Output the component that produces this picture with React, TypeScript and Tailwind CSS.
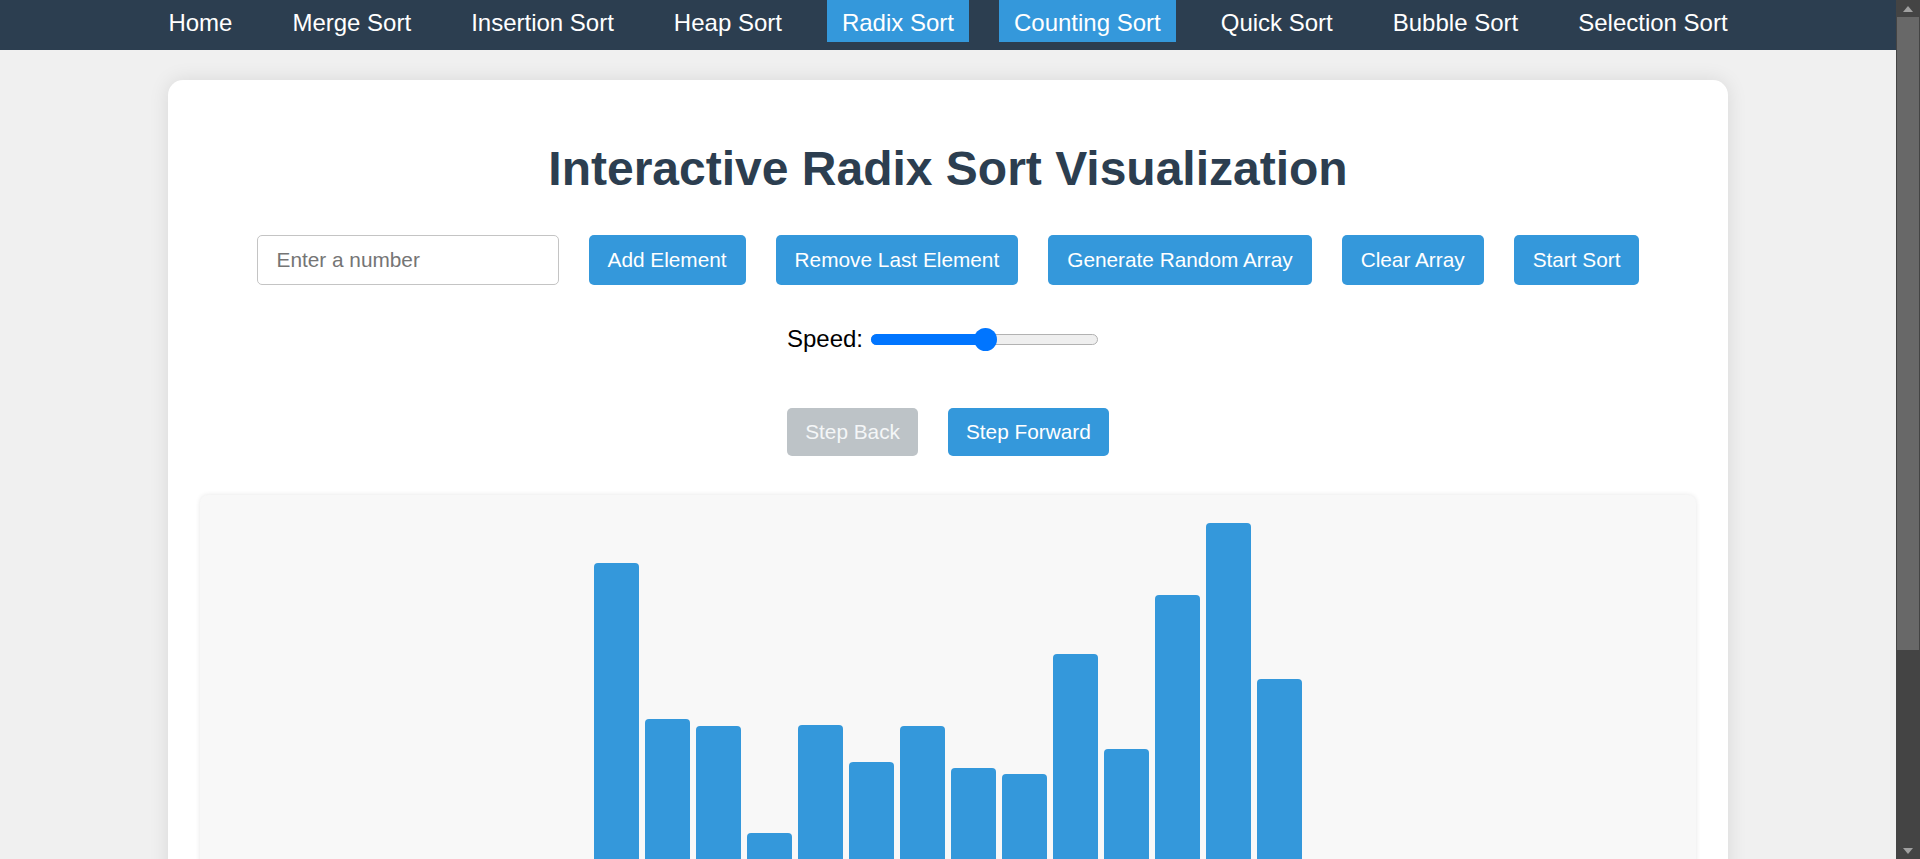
import { useState } from 'react';

const navItems = [
  'Home',
  'Merge Sort',
  'Insertion Sort',
  'Heap Sort',
  'Radix Sort',
  'Counting Sort',
  'Quick Sort',
  'Bubble Sort',
  'Selection Sort',
];

const highlighted = ['Radix Sort', 'Counting Sort'];

// bar heights in px, measured from the container floor
const bars = [330, 174, 167, 60, 168, 131, 167, 125, 119, 239, 144, 298, 370, 214];

const actions = ['Add Element', 'Remove Last Element', 'Generate Random Array', 'Clear Array', 'Start Sort'];

function SpeedSlider({ value }: { value: number }) {
  const trackWidth = 227;
  const fill = Math.round((trackWidth * value) / 100);

  return (
    <div className="relative h-[23px] w-[227px]">
      <div className="absolute left-0 right-0 top-[6px] h-[11px] rounded-full border border-[#b2b2b2] bg-[#efefef]" />
      <div className="absolute left-0 top-[6px] h-[11px] rounded-full bg-[#0075ff]" style={{ width: fill }} />
      <div
        className="absolute top-0 h-[23px] w-[23px] rounded-full bg-[#0075ff]"
        style={{ left: fill - 11 }}
      />
    </div>
  );
}

function Scrollbar() {
  return (
    <div className="sticky top-0 flex h-screen w-[24px] shrink-0 flex-col bg-[#444444]">
      <div className="flex h-[17px] items-center justify-center">
        <div className="h-0 w-0 border-x-[5px] border-b-[6px] border-x-transparent border-b-[#a0a0a0]" />
      </div>
      <div className="mx-[1px] h-[633px] bg-[#686868]" />
      <div className="flex-1" />
      <div className="flex h-[17px] items-center justify-center">
        <div className="h-0 w-0 border-x-[5px] border-t-[6px] border-x-transparent border-t-[#a0a0a0]" />
      </div>
    </div>
  );
}

export default function App() {
  const [value, setValue] = useState('');

  return (
    <div className="flex min-h-screen bg-[#f0f0f0] font-['Liberation_Sans',Arial,sans-serif]">
      <div className="min-w-0 flex-1 pb-10">
        <nav className="h-[50px] bg-[#2c3e50]">
          <ul className="flex justify-center gap-[30px]">
            {navItems.map((item) => (
              <li key={item}>
                <a
                  href="#"
                  className={`block h-[42px] px-[15px] pt-[9px] text-[24px] leading-[28px] text-white ${
                    highlighted.includes(item) ? 'bg-[#3498db]' : ''
                  }`}
                >
                  {item}
                </a>
              </li>
            ))}
          </ul>
        </nav>

        <main className="mx-auto mt-[30px] w-[1560px] rounded-[15px] bg-white px-[30px] pb-[30px] pt-[61px] shadow-[0_0_20px_rgba(0,0,0,0.1)]">
          <h1 className="text-center text-[48px] font-bold leading-[56px] text-[#2c3e50]">
            Interactive Radix Sort Visualization
          </h1>

          <div className="mt-[38px] flex justify-center gap-[30px]">
            <input
              type="number"
              value={value}
              onChange={(e) => setValue(e.target.value)}
              placeholder="Enter a number"
              className="h-[50px] w-[302px] rounded-[5px] border border-[#c4c4c4] px-[19px] text-[20.8px] text-black outline-none placeholder:text-[#757575]"
            />
            {actions.map((label) => (
              <button
                key={label}
                type="button"
                className="h-[50px] rounded-[5px] bg-[#3498db] px-[19px] text-[20.8px] text-white"
              >
                {label}
              </button>
            ))}
          </div>

          <div className="mt-[40px] flex h-[28px] items-center justify-center gap-[8px] pr-[11px]">
            <label className="text-[24px] leading-[28px] text-black">Speed:</label>
            <SpeedSlider value={50} />
          </div>

          <div className="mt-[55px] flex justify-center gap-[30px]">
            <button
              type="button"
              disabled
              className="h-[48px] rounded-[5px] bg-[#bdc3c7] px-[18px] text-[20.8px] text-[#f4f6f7]"
            >
              Step Back
            </button>
            <button
              type="button"
              className="h-[48px] rounded-[5px] bg-[#3498db] px-[18px] text-[20.8px] text-white"
            >
              Step Forward
            </button>
          </div>

          <div className="mx-[2px] mt-[39px] flex h-[418px] items-end justify-center gap-[6px] rounded-[8px] bg-[#f8f8f8] pb-[20px] shadow-[0_0_5px_rgba(0,0,0,0.1)]">
            {bars.map((h, i) => (
              <div key={i} className="w-[45px] rounded-t-[4px] bg-[#3498db]" style={{ height: h }} />
            ))}
          </div>
        </main>
      </div>
      <Scrollbar />
    </div>
  );
}
